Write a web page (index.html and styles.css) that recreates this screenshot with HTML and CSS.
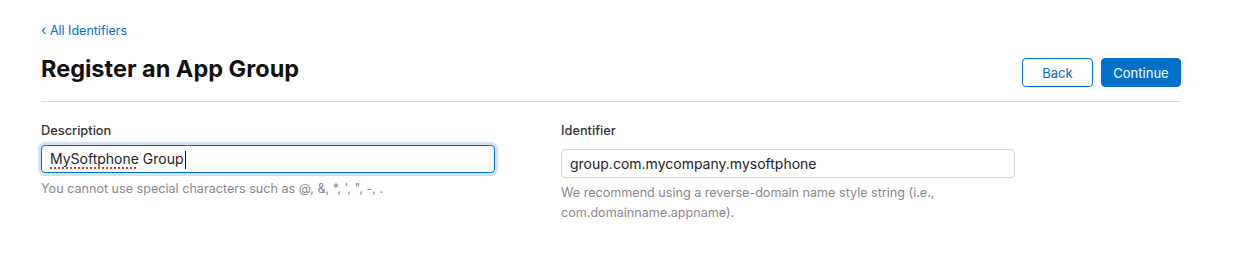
FILE: index.html
```html
<!DOCTYPE html>
<html lang="en">
<head>
<meta charset="utf-8">
<title>Register an App Group</title>
<link rel="stylesheet" href="styles.css">
</head>
<body>
<div class="page">
  <a class="back-link" href="#"><span class="chev">&lsaquo;</span> All Identifiers</a>
  <div class="header">
    <h1 class="title">Register an App Group</h1>
    <div class="actions">
      <button class="btn btn-secondary">Back</button>
      <button class="btn btn-primary">Continue</button>
    </div>
  </div>
  <div class="form">
    <div class="field">
      <div class="label">Description</div>
      <div class="input focused"><span class="misspelled">MySoftphone</span> Group<span class="caret"></span></div>
      <div class="help">You cannot use special characters such as @, &amp;, *, ', ", -, .</div>
    </div>
    <div class="field field-right">
      <div class="label">Identifier</div>
      <div class="input">group.com.mycompany.mysoftphone</div>
      <div class="help">We recommend using a reverse-domain name style string (i.e., com.domainname.appname).</div>
    </div>
  </div>
</div>
</body>
</html>
```
FILE: styles.css
```css
* { box-sizing: border-box; }
html, body { margin: 0; padding: 0; background: #fff; }
body {
  font-family: Inter, "Liberation Sans", Arial, sans-serif;
  color: #1d1d1f;
  -webkit-font-smoothing: antialiased;
}
.page {
  width: 1181px;
  padding: 21px 0 0 41px;
}
.back-link {
  display: block;
  height: 20px;
  font-size: 12.5px;
  line-height: 20px;
  color: #0070c9;
  text-decoration: none;
}
.chev { font-size: 14px; line-height: 1; }
.header {
  display: flex;
  justify-content: space-between;
  align-items: flex-start;
  padding-top: 15px;
  padding-bottom: 14px;
  border-bottom: 1px solid #d9d9d9;
}
.title {
  margin: 1px 0 0;
  font-size: 23.5px;
  line-height: 24px;
  font-weight: 700;
  color: #111;
  letter-spacing: 0;
}
.actions {
  display: flex;
  gap: 8px;
  margin-top: 2px;
}
.btn {
  height: 29px;
  border-radius: 4px;
  font-family: inherit;
  font-size: 13px;
  padding: 0;
  cursor: pointer;
}
.btn-secondary {
  width: 71px;
  background: #fff;
  color: #0070c9;
  border: 1px solid #0070c9;
}
.btn-primary {
  width: 80px;
  background: #0070c9;
  color: #fff;
  border: 1px solid #0070c9;
}
.form {
  display: flex;
  padding-top: 19px;
}
.field { width: 520px; }
.label {
  font-size: 12.8px;
  line-height: 20px;
  font-weight: 500;
  color: #333;
}
.input {
  width: 454px;
  height: 29px;
  margin-top: 8px;
  padding: 0 8px;
  border: 1px solid #d6d6d6;
  border-radius: 4px;
  font-size: 14px;
  line-height: 27px;
  color: #222;
  white-space: nowrap;
}
.input.focused {
  height: 28px;
  margin-top: 4px;
  line-height: 26px;
  border-color: #0070c9;
  box-shadow: 0 0 0 3px #cfe1f3;
}
.misspelled {
  text-decoration: underline dotted #e03030;
  text-underline-offset: 3px;
  text-decoration-thickness: 2px;
}
.caret {
  display: inline-block;
  width: 1px;
  height: 18px;
  background: #111;
  vertical-align: middle;
  margin-left: 1px;
}
.help {
  margin-top: 6px;
  font-size: 12.6px;
  line-height: 20px;
  color: #86868b;
  width: 460px;
}
.field-right .help { margin-top: 5px; }
```
